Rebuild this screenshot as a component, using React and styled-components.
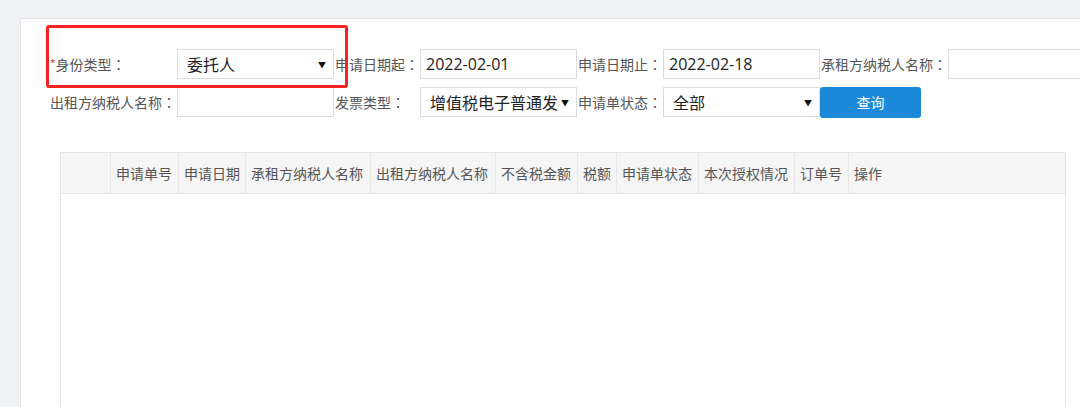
import React from 'react'
import styled, { createGlobalStyle } from 'styled-components'

const GlobalStyle = createGlobalStyle`
  html, body {
    margin: 0;
    padding: 0;
    background: #eff1f4;
    font-family: "Open Sans", "Noto Sans CJK SC", sans-serif;
  }
`;

const Page = styled.div`
  height: 407px;
  overflow: hidden;
  padding: 18px 0 0 20px;
  box-sizing: border-box;
`;

const Panel = styled.div`
  position: relative;
  min-height: 400px;
  background: #fff;
  border-top: 1px solid #e3e5e8;
  border-left: 1px solid #e3e5e8;
  padding: 30px 0 0 28px;
  box-sizing: border-box;
`;

const Highlight = styled.div`
  position: absolute;
  left: 25px;
  top: 6px;
  width: 302px;
  height: 63px;
  border: 3px solid #f52222;
  border-radius: 3px;
  box-sizing: border-box;
  pointer-events: none;
`;

const Filters = styled.div`
  display: grid;
  grid-template-columns: auto 157px auto 157px auto 157px auto 157px;
  grid-auto-rows: 30px;
  row-gap: 8px;
  justify-content: start;
  align-items: center;
  width: max-content;
`;

const Label = styled.label`
  padding: 0 1px;
  font-size: 14px;
  color: #555;
  white-space: nowrap;
  font-family: "Noto Sans CJK SC", sans-serif;
`;

const Colon = styled.span`
  font-family: "Noto Sans CJK TC", sans-serif;
`;

const Star = styled.span`
  color: #e33;
  font-size: 12px;
  vertical-align: 1px;
`;

const Field = styled.div`
  height: 30px;
  border: 1px solid #dcdcdc;
  box-sizing: border-box;
  display: flex;
  align-items: center;
  padding: ${p => (p.$select ? '0 7px 0 9px' : '0 5px')};
  font-size: 16px;
  color: #222;
  background: #fff;
  overflow: hidden;
`;

const FieldText = styled.span`
  flex: 1;
  white-space: nowrap;
  overflow: hidden;
`;

const Arrow = styled.span`
  font-size: 8px;
  color: #111;
  margin-left: 2px;
`;

const Button = styled.button`
  width: 101px;
  height: 31px;
  border: none;
  border-radius: 3px;
  background: #1c89da;
  color: #fff;
  font-size: 14px;
  font-family: "Noto Sans CJK SC", sans-serif;
  cursor: pointer;
`;

const Table = styled.div`
  margin: 35px 0 0 11px;
  width: 1006px;
  height: 300px;
  border: 1px solid #e6e6e6;
  box-sizing: border-box;
`;

const HeadRow = styled.div`
  display: grid;
  grid-template-columns: 50px 68px 67px 125px 125px 82px 39px 82px 96px 54px 1fr;
  height: 40px;
  background: #f5f5f5;
  border-bottom: 1px solid #e6e6e6;
`;

const HeadCell = styled.div`
  display: flex;
  align-items: center;
  padding-left: 5px;
  border-right: 1px solid #e6e6e6;
  font-size: 14px;
  color: #555;
  white-space: nowrap;
  overflow: hidden;
  font-family: "Noto Sans CJK SC", sans-serif;
  &:last-child {
    border-right: none;
  }
`;

const columns = ['', '申请单号', '申请日期', '承租方纳税人名称', '出租方纳税人名称', '不含税金额', '税额', '申请单状态', '本次授权情况', '订单号', '操作'];

function Select({ value }) {
  return (
    <Field $select>
      <FieldText>{value}</FieldText>
      <Arrow>▼</Arrow>
    </Field>
  )
}

function FilterLabel({ required, children }) {
  return (
    <Label>
      {required && <Star>*</Star>}
      {children}
      <Colon>：</Colon>
    </Label>
  )
}

export default function App() {
  return (
    <Page>
      <GlobalStyle />
      <Panel>
        <Highlight />
        <Filters>
          <FilterLabel required>身份类型</FilterLabel>
          <Select value="委托人" />
          <FilterLabel>申请日期起</FilterLabel>
          <Field>2022-02-01</Field>
          <FilterLabel>申请日期止</FilterLabel>
          <Field>2022-02-18</Field>
          <FilterLabel>承租方纳税人名称</FilterLabel>
          <Field />

          <FilterLabel>出租方纳税人名称</FilterLabel>
          <Field />
          <FilterLabel>发票类型</FilterLabel>
          <Select value="增值税电子普通发票" />
          <FilterLabel>申请单状态</FilterLabel>
          <Select value="全部" />
          <Button>查询</Button>
        </Filters>
        <Table>
          <HeadRow>
            {columns.map((c, i) => <HeadCell key={i}>{c}</HeadCell>)}
          </HeadRow>
        </Table>
      </Panel>
    </Page>
  )
}
